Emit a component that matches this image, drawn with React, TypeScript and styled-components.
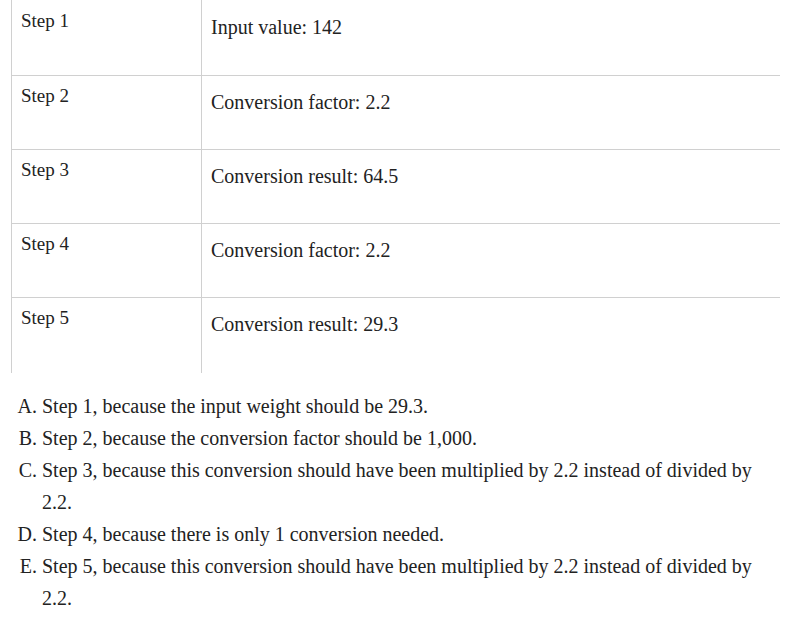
import React from "react";
import styled, { createGlobalStyle } from "styled-components";

const Global = createGlobalStyle`
  html, body { margin: 0; padding: 0; background: #ffffff; }
  body { font-family: "Liberation Serif", "Times New Roman", serif; color: #222222; }
`;

const Page = styled.div`
  width: 795px;
  height: 631px;
  overflow: hidden;
`;

const Table = styled.div`
  margin-left: 11px;
  width: 768px;
  border-left: 1px solid #d0d0d0;
  display: flex;
  flex-direction: column;
`;

const Row = styled.div<{ $h: number; $last?: boolean }>`
  display: grid;
  grid-template-columns: 190px 1fr;
  height: ${(p) => p.$h}px;
  border-bottom: ${(p) => (p.$last ? "none" : "1px solid #d0d0d0")};
  box-sizing: border-box;
`;

const LabelCell = styled.div<{ $top: number }>`
  border-right: 1px solid #d0d0d0;
  padding: ${(p) => p.$top}px 0 0 9px;
  font-size: 19px;
  line-height: 22px;
`;

const ValueCell = styled.div<{ $top: number }>`
  padding: ${(p) => p.$top}px 0 0 9px;
  font-size: 20px;
  line-height: 22px;
`;

const Answers = styled.div`
  margin-top: 17px;
  width: 772px;
  display: flex;
  flex-direction: column;
`;

const Answer = styled.div`
  display: grid;
  grid-template-columns: 37px 1fr;
  column-gap: 5px;
  font-size: 20px;
  line-height: 32px;
`;

const Letter = styled.span`
  text-align: right;
`;

const rows = [
  ["Step 1", "Input value: 142"],
  ["Step 2", "Conversion factor: 2.2"],
  ["Step 3", "Conversion result: 64.5"],
  ["Step 4", "Conversion factor: 2.2"],
  ["Step 5", "Conversion result: 29.3"],
];

const answers = [
  ["A.", "Step 1, because the input weight should be 29.3."],
  ["B.", "Step 2, because the conversion factor should be 1,000."],
  ["C.", "Step 3, because this conversion should have been multiplied by 2.2 instead of divided by 2.2."],
  ["D.", "Step 4, because there is only 1 conversion needed."],
  ["E.", "Step 5, because this conversion should have been multiplied by 2.2 instead of divided by 2.2."],
];

export default function App() {
  return (
    <Page>
      <Global />
      <Table>
        {rows.map(([a, b], i) => (
          <Row key={a} $h={i === 0 ? 76 : i === rows.length - 1 ? 75 : 74} $last={i === rows.length - 1}>
            <LabelCell $top={i === 0 ? 10 : 9}>{a}</LabelCell>
            <ValueCell $top={i === 0 ? 16 : 15}>{b}</ValueCell>
          </Row>
        ))}
      </Table>
      <Answers>
        {answers.map(([l, t]) => (
          <Answer key={l}>
            <Letter>{l}</Letter>
            <span>{t}</span>
          </Answer>
        ))}
      </Answers>
    </Page>
  );
}
